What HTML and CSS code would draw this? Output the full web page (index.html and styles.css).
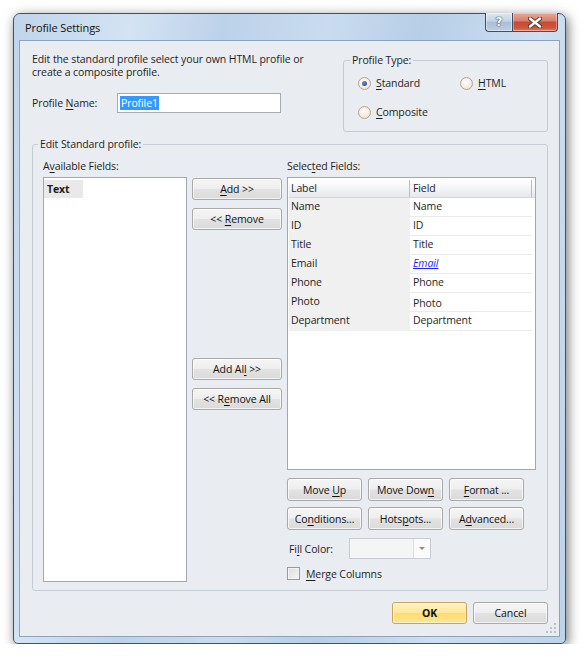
FILE: index.html
```html
<!DOCTYPE html>
<html lang="en">
<head>
    <meta charset="UTF-8">
    <meta name="viewport" content="width=device-width, initial-scale=1.0">
    <title>Profile Settings</title>
    <link rel="stylesheet" href="styles.css">
</head>
<body>

    <div class="window">

        <!-- Title bar -->
        <div class="titlebar">
            <span class="title">Profile Settings</span>
            <div class="caption-buttons">
                <div class="cap-btn help-btn"><span>?</span></div>
                <div class="cap-btn close-btn">
                    <svg width="14" height="11" viewBox="0 0 14 11">
                        <path d="M2 1.5 L12 9.5 M12 1.5 L2 9.5" stroke="#3a3a3a" stroke-width="4.2" stroke-linecap="round"/>
                        <path d="M2 1.5 L12 9.5 M12 1.5 L2 9.5" stroke="#ffffff" stroke-width="2.4" stroke-linecap="round"/>
                    </svg>
                </div>
            </div>
        </div>

        <div class="client">

            <!-- Top: intro + profile type -->
            <div class="top-row">
                <div class="intro">
                    <p class="intro-text">Edit the standard profile select your own HTML profile or<br>create a composite profile.</p>
                    <div class="name-row">
                        <label class="name-label">Profile <u>N</u>ame:</label>
                        <div class="textbox"><span class="selection">Profile1</span></div>
                    </div>
                </div>

                <fieldset class="group type-group">
                    <legend>Profile Type:</legend>
                    <div class="radio-grid">
                        <div class="radio-item"><span class="radio checked"></span><span><u>S</u>tandard</span></div>
                        <div class="radio-item"><span class="radio"></span><span><u>H</u>TML</span></div>
                        <div class="radio-item"><span class="radio"></span><span><u>C</u>omposite</span></div>
                    </div>
                </fieldset>
            </div>

            <!-- Edit standard profile -->
            <fieldset class="group edit-group">
                <legend>Edit Standard profile:</legend>
                <div class="edit-grid">

                    <div class="avail-col">
                        <div class="field-label">A<u>v</u>ailable Fields:</div>
                        <div class="listbox">
                            <div class="list-item">Text</div>
                        </div>
                    </div>

                    <div class="mid-col">
                        <div class="btn-stack">
                            <button class="btn"><u>A</u>dd &gt;&gt;</button>
                            <button class="btn">&lt;&lt; <u>R</u>emove</button>
                        </div>
                        <div class="btn-stack all-stack">
                            <button class="btn">Add Al<u>l</u> &gt;&gt;</button>
                            <button class="btn">&lt;&lt; R<u>e</u>move All</button>
                        </div>
                    </div>

                    <div class="sel-col">
                        <div class="field-label">Selec<u>t</u>ed Fields:</div>
                        <div class="datagrid">
                            <div class="grid-head">
                                <div class="head-cell">Label</div>
                                <div class="head-cell">Field</div>
                            </div>
                            <div class="grid-row"><div class="label-cell">Name</div><div class="field-cell">Name</div></div>
                            <div class="grid-row"><div class="label-cell">ID</div><div class="field-cell">ID</div></div>
                            <div class="grid-row"><div class="label-cell">Title</div><div class="field-cell">Title</div></div>
                            <div class="grid-row"><div class="label-cell">Email</div><div class="field-cell"><a class="link" href="#">Email</a></div></div>
                            <div class="grid-row"><div class="label-cell">Phone</div><div class="field-cell">Phone</div></div>
                            <div class="grid-row"><div class="label-cell">Photo</div><div class="field-cell photo-cell">Photo</div></div>
                            <div class="grid-row"><div class="label-cell">Department</div><div class="field-cell">Department</div></div>
                        </div>

                        <div class="action-grid">
                            <button class="btn">Move <u>U</u>p</button>
                            <button class="btn">Move Dow<u>n</u></button>
                            <button class="btn"><u>F</u>ormat ...</button>
                            <button class="btn">Co<u>n</u>ditions...</button>
                            <button class="btn">Hots<u>p</u>ots...</button>
                            <button class="btn">A<u>d</u>vanced...</button>
                        </div>

                        <div class="fill-row">
                            <span class="fill-label">Fi<u>l</u>l Color:</span>
                            <div class="combo">
                                <div class="combo-value"></div>
                                <div class="combo-arrow"><span class="arrow"></span></div>
                            </div>
                        </div>

                        <div class="check-row">
                            <span class="checkbox"></span>
                            <span><u>M</u>erge Columns</span>
                        </div>
                    </div>

                </div>
            </fieldset>

            <!-- Dialog buttons -->
            <div class="footer">
                <button class="btn dialog-btn ok-btn">OK</button>
                <button class="btn dialog-btn">Cancel</button>
            </div>

            <svg class="grip" width="11" height="11" viewBox="0 0 11 11">
                <g fill="#b8c0c8">
                    <rect x="8" y="0" width="2" height="2"/>
                    <rect x="4" y="4" width="2" height="2"/>
                    <rect x="8" y="4" width="2" height="2"/>
                    <rect x="0" y="8" width="2" height="2"/>
                    <rect x="4" y="8" width="2" height="2"/>
                    <rect x="8" y="8" width="2" height="2"/>
                </g>
            </svg>
        </div>
    </div>

</body>
</html>
```

FILE: styles.css
```css
/* Page */
body {
    margin: 0;
    background-color: #ffffff;
    font-family: "Open Sans", "Noto Sans", sans-serif;
    font-size: 10.5px;
    letter-spacing: -0.1px;
    color: #1e1e1e;
}

u {
    text-decoration-thickness: 1px;
    text-underline-offset: 2px;
}

/* Window frame */
.window {
    box-sizing: border-box;
    margin: 13px 0 0 13px;
    width: 553px;
    height: 631px;
    padding: 0 5px 6px 5px;
    display: flex;
    flex-direction: column;
    border: 1px solid #45515f;
    border-radius: 7px 7px 5px 5px;
    background: linear-gradient(100deg, #c0d5eb 0%, #d3e3f3 18%, #bcd2e9 32%, #c9dcef 48%, #b7cee7 62%, #cddff1 80%, #bdd3ea 100%);
    box-shadow: 2px 3px 12px rgba(0, 0, 0, 0.55);
}

.titlebar {
    height: 26px;
    display: flex;
    justify-content: space-between;
    align-items: flex-start;
}

.title {
    line-height: 27px;
    padding-left: 6px;
    font-size: 11px;
    color: #111;
}

.caption-buttons {
    display: flex;
    margin-top: -1px;
    margin-right: 2px;
}

.cap-btn {
    box-sizing: border-box;
    height: 19px;
    display: flex;
    align-items: center;
    justify-content: center;
    border: 1px solid #3f4e61;
    border-top: none;
}

.help-btn {
    width: 27px;
    border-right: none;
    border-radius: 0 0 0 4px;
    background: linear-gradient(#dbe6f1, #c3d3e5 45%, #a9bdd5 52%, #bccfe3 100%);
    box-shadow: inset 0 0 0 1px rgba(255, 255, 255, 0.45);
}

.help-btn span {
    font-family: "DejaVu Sans", sans-serif;
    font-weight: bold;
    font-size: 12px;
    color: #ffffff;
    text-shadow: 0 0 1px #3a4656, 0 0 1px #3a4656, 0 0 1px #3a4656;
}

.close-btn {
    width: 46px;
    border-radius: 0 0 4px 0;
    background: linear-gradient(#e9a898, #d8806c 42%, #c64a31 52%, #d0583b 85%, #e0886c 100%);
    box-shadow: inset 0 0 0 1px rgba(255, 255, 255, 0.35);
}

/* Client area */
.client {
    flex: 1;
    position: relative;
    padding: 12px 11px 0 12px;
    background-color: #e9ecf0;
    border: 1px solid #8da2bb;
}

.top-row {
    display: flex;
    justify-content: space-between;
    align-items: flex-start;
}

.intro-text {
    margin: 0;
    line-height: 13px;
}

.name-row {
    display: flex;
    align-items: center;
    margin-top: 14px;
}

.name-label {
    width: 85px;
}

.textbox {
    box-sizing: border-box;
    width: 164px;
    height: 20px;
    padding: 2px;
    background-color: #ffffff;
    border: 1px solid #a7abb2;
}

.selection {
    display: inline-block;
    height: 14px;
    line-height: 14px;
    padding: 0 1px;
    background-color: #3399ff;
    color: #ffffff;
}

/* Group boxes */
.group {
    margin: 0;
    border: 1px solid #c5ccd4;
    border-radius: 3px;
}

.group legend {
    padding: 0 2px;
    line-height: 14px;
}

.type-group {
    box-sizing: border-box;
    width: 205px;
    padding: 6px 10px 9px 14px;
}

.type-group legend {
    margin-left: -8px;
}

.radio-grid {
    display: grid;
    grid-template-columns: 102px auto;
    grid-auto-rows: 20px;
    row-gap: 9px;
}

.radio-item {
    display: flex;
    align-items: center;
    gap: 5px;
}

.radio {
    box-sizing: border-box;
    width: 13px;
    height: 13px;
    border-radius: 50%;
    border: 1px solid #b5a48e;
    background: radial-gradient(circle at 45% 40%, #ffffff 0%, #f6efe6 45%, #e4d7c5 100%);
    display: flex;
    align-items: center;
    justify-content: center;
}

.radio.checked::after {
    content: "";
    width: 5px;
    height: 5px;
    border-radius: 50%;
    background: radial-gradient(circle at 40% 35%, #6d8fc0, #1c3a6b);
}

.edit-group {
    margin-top: 5px;
    padding: 8px 11px 8px 10px;
}

.edit-group legend {
    margin-left: -5px;
}

.edit-grid {
    display: grid;
    grid-template-columns: 144px 90px 1fr;
    column-gap: 5px;
    height: 423px;
}

.field-label {
    line-height: 14px;
    margin-bottom: 4px;
}

/* Available fields list */
.avail-col {
    display: flex;
    flex-direction: column;
}

.listbox {
    flex: 1;
    padding-top: 2px;
    background-color: #ffffff;
    border: 1px solid #a3a8ae;
}

.list-item {
    width: 36px;
    height: 18px;
    line-height: 18px;
    padding-left: 3px;
    font-weight: bold;
    background-color: #e9e9e9;
}

/* Buttons */
.btn {
    box-sizing: border-box;
    height: 22px;
    padding: 0;
    font-family: inherit;
    font-size: inherit;
    letter-spacing: inherit;
    color: #111;
    border: 1px solid #a9a9a9;
    border-radius: 3px;
    background: linear-gradient(#f5f5f5, #eeeeee 48%, #e2e2e2 52%, #dadada 100%);
    box-shadow: inset 0 0 0 1px rgba(255, 255, 255, 0.7);
}

.mid-col {
    padding-top: 19px;
}

.btn-stack {
    display: flex;
    flex-direction: column;
    gap: 8px;
}

.all-stack {
    margin-top: 128px;
}

/* Selected fields grid */
.datagrid {
    box-sizing: border-box;
    height: 293px;
    padding: 2px 0 0 1px;
    background-color: #ffffff;
    border: 1px solid #a3a8ae;
}

.grid-head {
    display: flex;
    height: 18px;
    background: linear-gradient(#ffffff, #f3f4f6 50%, #e6e8eb 100%);
    border-bottom: 1px solid #d3d6da;
    box-sizing: border-box;
}

.head-cell {
    line-height: 17px;
    border-right: 1px solid #b8bcc2;
}

.head-cell:first-child {
    width: 121px;
    padding-left: 2px;
    box-sizing: border-box;
}

.head-cell:last-child {
    width: 122px;
    padding-left: 3px;
    box-sizing: border-box;
}

.grid-row {
    display: flex;
    height: 19px;
}

.label-cell {
    box-sizing: border-box;
    width: 121px;
    padding-left: 2px;
    line-height: 17px;
    background-color: #f0f0f0;
}

.field-cell {
    box-sizing: border-box;
    width: 122px;
    padding-left: 3px;
    line-height: 17px;
    border-bottom: 1px solid #ebebeb;
}

.photo-cell {
    line-height: 20px;
}

.link {
    color: #1b1bff;
    font-style: italic;
}

.action-grid {
    display: grid;
    grid-template-columns: repeat(3, 75px);
    grid-auto-rows: 23px;
    column-gap: 6px;
    row-gap: 6px;
    margin-top: 8px;
}

.action-grid .btn {
    height: 23px;
}

/* Fill color combo */
.fill-row {
    display: flex;
    align-items: center;
    margin-top: 8px;
    padding-left: 2px;
}

.fill-label {
    width: 60px;
}

.combo {
    box-sizing: border-box;
    display: flex;
    width: 82px;
    height: 21px;
    border: 1px solid #c9ccd1;
    background-color: #f4f5f6;
}

.combo-value {
    flex: 1;
}

.combo-arrow {
    width: 16px;
    display: flex;
    align-items: center;
    justify-content: center;
    border-left: 1px solid #dadde1;
    background-color: #fbfbfb;
}

.arrow {
    width: 0;
    height: 0;
    border-left: 3px solid transparent;
    border-right: 3px solid transparent;
    border-top: 3px solid #8c8c8c;
}

.check-row {
    display: flex;
    align-items: center;
    gap: 6px;
    margin-top: 8px;
    height: 13px;
}

.checkbox {
    box-sizing: border-box;
    width: 13px;
    height: 13px;
    border: 1px solid #9a9a9a;
    background: linear-gradient(135deg, #dcdcdc, #f6f6f6);
    box-shadow: inset 0 0 0 1px #f2f2f2;
}

/* Dialog footer */
.footer {
    display: flex;
    justify-content: flex-end;
    gap: 6px;
    margin-top: 11px;
}

.dialog-btn {
    width: 75px;
}

.ok-btn {
    font-weight: bold;
    border-color: #c9a458;
    background: linear-gradient(#fff2c4, #ffe79b 48%, #ffdb70 52%, #ffe595 100%);
    box-shadow: inset 0 0 0 1px rgba(255, 250, 225, 0.8);
}

.grip {
    position: absolute;
    right: 2px;
    bottom: 2px;
}
```
